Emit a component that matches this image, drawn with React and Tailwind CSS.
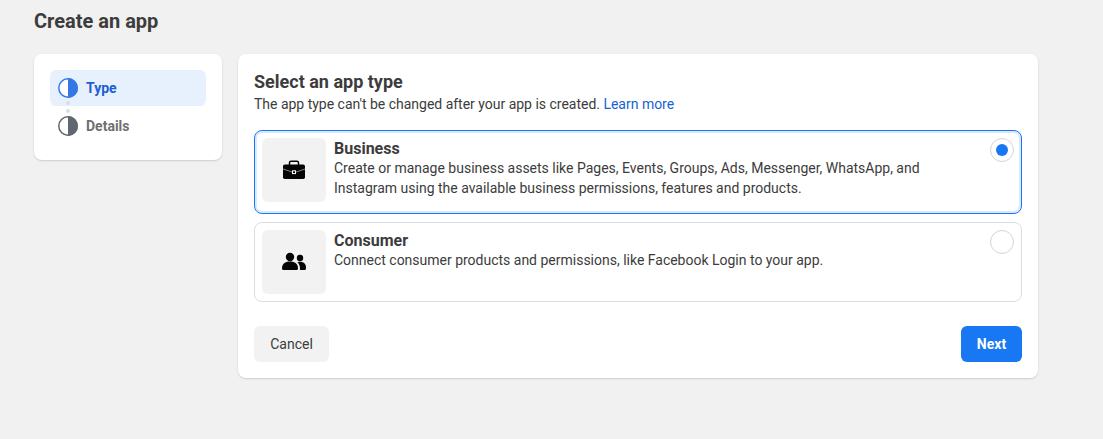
import React from "react";

function HalfCircle({ color }) {
  return (
    <svg width="20" height="20" viewBox="0 0 20 20" className="shrink-0">
      <circle cx="10" cy="10" r="9.25" fill="white" stroke={color} strokeWidth="1.5" />
      <path d="M10 0a10 10 0 0 1 0 20z" fill={color} />
    </svg>
  );
}

function Briefcase() {
  return (
    <svg width="24" height="24" viewBox="0 0 24 24">
      <path d="M7.500 7V4.800c0-.9.7-1.600 1.600-1.600h5.800c.9 0 1.600.7 1.600 1.600V7" fill="none" stroke="#050505" strokeWidth="1.500" />
      <rect x="1" y="6.500" width="22" height="14.500" rx="1.800" fill="#050505" />
      <path d="M1 11l9 3M23 11l-9 3" stroke="white" strokeWidth="0.500" fill="none" />
      <rect x="10.500" y="12.800" width="3" height="2.800" fill="#050505" stroke="white" strokeWidth="1" />
    </svg>
  );
}

function People() {
  return (
    <svg width="24" height="24" viewBox="0 0 24 24" fill="#050505">
      <circle cx="8" cy="7" r="4.200" />
      <circle cx="18" cy="8" r="3.200" />
      <path d="M0 18c0-3.800 3-6.500 8-6.500s8 2.700 8 6.500v.500c0 .9-.6 1.500-1.500 1.500h-13C.6 20 0 19.400 0 18.500z" />
      <path d="M15.500 12.300c.8-.4 1.600-.5 2.500-.5 3.500 0 6 2.200 6 5.400v1.300c0 .9-.6 1.500-1.500 1.500h-4.700c.2-.5.200-1 .2-1.500 0-2.600-1-4.700-2.500-6.200z" />
    </svg>
  );
}

function Option({ icon, title, selected, children, height }) {
  return (
    <div
      className={`flex items-start rounded-lg bg-white p-[7px] ${height} ${
        selected ? "border border-[#1877f2] shadow-[inset_0_0_0_2px_#dbe9fc]" : "border border-[#dadde1]"
      }`}
    >
      <div className="flex h-16 w-16 shrink-0 items-center justify-center rounded-md bg-[#f2f2f2]">{icon}</div>
      <div className="ml-2 flex-1 text-sm leading-[20px] tracking-[-0.006px] text-[#3c3c3c]">
        <div className="pt-px text-base font-bold leading-[19px] tracking-normal text-[#3c3c3c]">{title}</div>
        {children}
      </div>
      <div className="flex h-6 w-6 shrink-0 items-center justify-center rounded-full border border-[#d4d4d4] bg-white">
        {selected && <div className="h-3 w-3 rounded-full bg-[#1877f2]" />}
      </div>
    </div>
  );
}

export default function App() {
  return (
    <div className="h-[439px] w-[1103px] overflow-hidden bg-[#f1f1f1] pl-[34px] font-['Roboto',sans-serif]">
      <h1 className="flex h-[54px] items-start pt-[9px] text-[20px] font-bold leading-6 text-[#3c3c3c]">Create an app</h1>

      <div className="flex items-start gap-4">
        {/* Steps */}
        <div className="h-[106px] w-[188px] rounded-lg bg-white p-4 shadow-[0_1px_2px_rgba(0,0,0,0.15)]">
          <div className="relative">
            <div className="flex h-9 items-center gap-2 rounded-md bg-[#e7f0fd] px-2">
              <HalfCircle color="#3578e5" />
              <span className="text-sm font-bold text-[#1c5fd0]">Type</span>
            </div>
            <div className="mt-0.5 flex h-9 items-center gap-2 px-2">
              <HalfCircle color="#606770" />
              <span className="text-sm font-bold text-[#6f6f6f]">Details</span>
            </div>
            <div className="absolute left-4 top-[31px] h-1 w-1 rounded-full bg-[#dadde1]" />
            <div className="absolute left-4 top-[39px] h-1 w-1 rounded-full bg-[#dadde1]" />
          </div>
        </div>

        {/* Main card */}
        <div className="h-[324px] w-[800px] rounded-lg bg-white p-4 shadow-[0_1px_2px_rgba(0,0,0,0.15)]">
          <h2 className="text-[18px] font-bold leading-6 text-[#3c3c3c]">Select an app type</h2>
          <p className="text-sm leading-5 tracking-[-0.012px] text-[#3c3c3c]">
            The app type can't be changed after your app is created. <span className="text-[#1664d0]">Learn more</span>
          </p>

          <div className="mt-4 flex flex-col gap-2">
            <Option icon={<Briefcase />} title="Business" selected height="h-[84px]">
              <div>Create or manage business assets like Pages, Events, Groups, Ads, Messenger, WhatsApp, and</div>
              <div>Instagram using the available business permissions, features and products.</div>
            </Option>
            <Option icon={<People />} title="Consumer" height="h-[80px]">
              <div>Connect consumer products and permissions, like Facebook Login to your app.</div>
            </Option>
          </div>

          <div className="mt-6 flex items-center justify-between">
            <button className="h-9 w-[75px] rounded-md bg-[#f2f2f2] text-sm text-[#3c3c3c]">Cancel</button>
            <button className="h-9 w-[61px] rounded-md bg-[#1877f2] text-sm font-bold text-white">Next</button>
          </div>
        </div>
      </div>
    </div>
  );
}
